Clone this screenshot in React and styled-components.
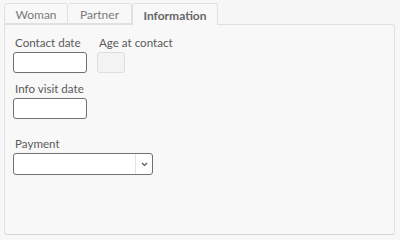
import React from 'react'
import styled, { createGlobalStyle } from 'styled-components'

const Global = createGlobalStyle`
  html, body {
    margin: 0;
    background: #f7f7f7;
    font-family: Lato, "Open Sans", sans-serif;
  }
`

const Page = styled.div`
  width: 400px;
  height: 240px;
  box-sizing: border-box;
  padding: 3px 5px 5px 4px;
  display: flex;
  flex-direction: column;
`

const TabBar = styled.div`
  display: flex;
  height: 21px;
  position: relative;
  z-index: 1;
`

const Tab = styled.div`
  box-sizing: border-box;
  width: ${p => p.w}px;
  height: ${p => (p.active ? 22 : 21)}px;
  display: flex;
  align-items: center;
  justify-content: center;
  border: 1px solid #e0e0e0;
  border-bottom: ${p => (p.active ? 'none' : '1px solid #e0e0e0')};
  border-left: ${p => (p.first || p.active ? '1px solid #e0e0e0' : 'none')};
  border-radius: 3px 3px 0 0;
  background: #f8f8f8;
  color: ${p => (p.active ? '#666' : '#7a7a7a')};
  font-size: 12px;
  font-weight: ${p => (p.active ? 700 : 400)};
  padding-top: 2px;
`

const Panel = styled.div`
  flex: 1;
  box-sizing: border-box;
  border: 1px solid #e0e0e0;
  border-bottom-color: #d6d6d6;
  border-radius: 0 3px 3px 3px;
  background: #f8f8f8;
  padding: 10px 8px;
  display: flex;
  flex-direction: column;
  gap: 8px;
`

const Row = styled.div`
  display: flex;
  gap: 10px;
  margin-bottom: ${p => p.mb || 0}px;
`

const Field = styled.div`
  display: flex;
  flex-direction: column;
`

const Label = styled.label`
  font-size: 11.6px;
  line-height: 16px;
  color: #5a5a5a;
  padding-left: 2px;
  margin-bottom: 1px;
`

const Input = styled.div`
  box-sizing: border-box;
  width: ${p => p.w}px;
  height: 21px;
  border: 1px solid ${p => (p.disabled ? '#dedede' : '#707070')};
  background: ${p => (p.disabled ? '#f3f3f3' : '#fff')};
  border-radius: 3px;
`

const Select = styled.div`
  box-sizing: border-box;
  width: 140px;
  height: 22px;
  border: 1px solid #707070;
  border-radius: 3px;
  background: #fff;
  display: flex;
  justify-content: flex-end;
`

const Arrow = styled.div`
  width: 16px;
  border-left: 1px solid #e4e4e4;
  display: flex;
  align-items: center;
  justify-content: center;
`

export default function App() {
  return (
    <Page>
      <Global />
      <TabBar>
        <Tab w={64} first>Woman</Tab>
        <Tab w={64}>Partner</Tab>
        <Tab w={86} active>Information</Tab>
      </TabBar>
      <Panel>
        <Row>
          <Field>
            <Label>Contact date</Label>
            <Input w={74} />
          </Field>
          <Field>
            <Label>Age at contact</Label>
            <Input w={28} disabled />
          </Field>
        </Row>
        <Row mb={9}>
          <Field>
            <Label>Info visit date</Label>
            <Input w={74} />
          </Field>
        </Row>
        <Row>
          <Field>
            <Label>Payment</Label>
            <Select>
              <Arrow>
                <svg width="7" height="5" viewBox="0 0 7 5">
                  <path d="M1 1 L3.5 3.5 L6 1" stroke="#555" strokeWidth="1.2" fill="none" />
                </svg>
              </Arrow>
            </Select>
          </Field>
        </Row>
      </Panel>
    </Page>
  )
}
